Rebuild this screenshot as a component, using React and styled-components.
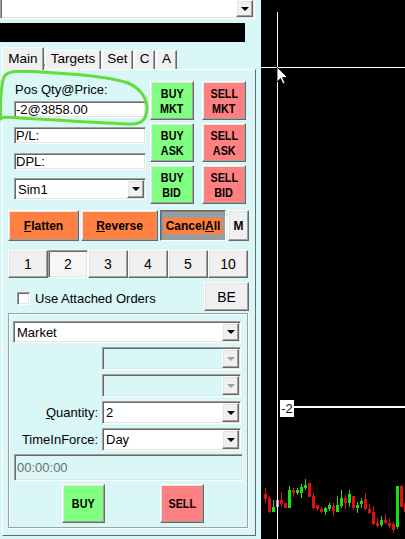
import React from "react";
import styled, { createGlobalStyle, css } from "styled-components";

const GlobalStyle = createGlobalStyle`
  * { box-sizing: border-box; }
  body {
    margin: 0;
    background: #000;
    overflow: hidden;
    font-family: "Liberation Sans", Arial, sans-serif;
  }
`;

const CYAN = "#daf7f7";
const FACE = "#f0f0f0";
const GREEN = "#80ff80";
const RED = "#ff8080";
const ORANGE = "#ff8040";

// classic 3D bevels
const raised = css`
  border: 1px solid;
  border-color: #fff #696969 #696969 #fff;
  box-shadow: inset -1px -1px #a0a0a0, inset 1px 1px #e3e3e3;
`;
const sunken = css`
  border: 1px solid;
  border-color: #a0a0a0 #fff #fff #a0a0a0;
  box-shadow: inset 1px 1px #696969, inset -1px -1px #e3e3e3;
`;

const Screen = styled.div`
  position: relative;
  display: flex;
  width: 405px;
  height: 539px;
  background: #000;
`;

const Side = styled.div`
  width: 261px;
  flex: none;
  display: flex;
  flex-direction: column;
  background: ${CYAN};
  color: #000;
  font-size: 13px;
`;

const TopCombo = styled.div`
  ${sunken};
  margin-top: -2px;
  width: 255px;
  height: 21px;
  padding: 1px;
  display: flex;
  justify-content: flex-end;
  background: #fff;
`;

const InfoBar = styled.div`
  margin-top: 4px;
  width: 245px;
  height: 19px;
  background: #000;
`;

const TabStrip = styled.div`
  margin-top: 5px;
  height: 22px;
  padding-left: 2px;
  display: flex;
  align-items: flex-end;
  gap: 1px;
`;

const Tab = styled.div`
  position: relative;
  z-index: 1;
  width: ${(p) => p.$w}px;
  height: ${(p) => (p.$active ? 23 : 19)}px;
  margin-bottom: ${(p) => (p.$active ? -1 : 0)}px;
  padding-top: ${(p) => (p.$active ? 3 : 0)}px;
  border: 1px solid;
  border-bottom: none;
  border-color: #fff #696969 transparent #fff;
  box-shadow: inset -1px 0 #a0a0a0;
  background: ${FACE};
  font-size: 13.5px;
  line-height: 15px;
  text-align: center;
`;

const TabPage = styled.div`
  margin-left: 2px;
  width: 254px;
  height: 467px;
  padding: 11px 6px 0 5px;
  border: 1px solid;
  border-color: #fff #696969 #696969 #fff;
  background: ${CYAN};
  display: flex;
  flex-direction: column;
`;

const TopGrid = styled.div`
  display: flex;
`;

const LeftCol = styled.div`
  margin-left: 6px;
  width: 132px;
  display: flex;
  flex-direction: column;
`;

const FieldLabel = styled.div`
  margin-top: 1px;
  padding-left: 1px;
  line-height: 15px;
`;

const Field = styled.div`
  ${sunken};
  margin-top: ${(p) => p.$mt}px;
  height: 17px;
  padding: 0 1px;
  display: flex;
  align-items: center;
  background: #fff;
  line-height: 15px;
  white-space: nowrap;
`;

const ComboBox = styled.div`
  ${sunken};
  margin-top: ${(p) => p.$mt || 0}px;
  height: ${(p) => p.$h || 22}px;
  padding: 1px;
  display: flex;
  align-items: stretch;
  background: ${(p) => (p.$disabled ? CYAN : "#fff")};
  grid-column: ${(p) => p.$span || "auto"};
`;

const ComboText = styled.div`
  flex: 1;
  display: flex;
  align-items: center;
  padding-left: 2px;
  font-size: 13px;
`;

const DropBtn = styled.div`
  ${raised};
  width: 17px;
  flex: none;
  display: flex;
  align-items: center;
  justify-content: center;
  background: ${FACE};
`;

const Arrow = styled.span`
  width: 0;
  height: 0;
  border-left: 4px solid transparent;
  border-right: 4px solid transparent;
  border-top: 4px solid ${(p) => (p.$disabled ? "#a0a0a0" : "#000")};
`;

const OrderGrid = styled.div`
  margin-left: 4px;
  display: grid;
  grid-template-columns: 44px 44px;
  grid-auto-rows: 39px;
  column-gap: 8px;
  row-gap: 3px;
`;

const ColorBtn = styled.div`
  ${raised};
  width: ${(p) => p.$w || 44}px;
  height: 39px;
  display: flex;
  flex-direction: column;
  align-items: center;
  justify-content: center;
  background: ${(p) => (p.$side === "buy" ? GREEN : RED)};
  font-weight: 700;
  font-size: 13.5px;
  line-height: 15px;
`;

// the trading buttons use a narrow bold face
const BtnLine = styled.span`
  display: inline-block;
  transform: scaleX(0.8);
`;

const ActionRow = styled.div`
  margin-top: 6px;
  height: 31px;
  display: flex;
  gap: 2px;
`;

const ActionBtn = styled.div`
  ${raised};
  width: ${(p) => p.$w}px;
  display: flex;
  align-items: center;
  justify-content: center;
  background: ${(p) => p.$bg || FACE};
  font-weight: 700;
  font-size: 12px;
`;

const CancelBtn = styled.div`
  width: 66px;
  display: flex;
  align-items: center;
  justify-content: center;
  border: 1px solid;
  border-color: #696969 #fff #fff #696969;
  box-shadow: inset 1px 1px #7a7a7a;
  background: #9c9c9c;
  font-weight: 700;
  font-size: 12px;
`;

const CancelText = styled.span`
  padding: 1px 2px;
  background: ${ORANGE};
`;

const NumRow = styled.div`
  margin-top: 9px;
  height: 28px;
  display: grid;
  grid-template-columns: repeat(6, 40px);
`;

const NumBtn = styled.div`
  ${(p) => (p.$pressed ? sunken : raised)};
  display: flex;
  align-items: center;
  justify-content: center;
  background: ${(p) => (p.$pressed ? "#f6f6f6" : FACE)};
  font-size: 14px;
`;

const OptionsRow = styled.div`
  margin-top: 4px;
  height: 29px;
  display: flex;
  align-items: center;
`;

const CheckBox = styled.div`
  ${sunken};
  margin: 4px 0 0 9px;
  width: 13px;
  height: 13px;
  background: #fff;
`;

const CheckLabel = styled.span`
  margin: 4px 0 0 5px;
  font-size: 13px;
`;

const BeBtn = styled.div`
  ${raised};
  margin-left: auto;
  width: 45px;
  height: 29px;
  display: flex;
  align-items: center;
  justify-content: center;
  background: ${FACE};
  font-size: 14px;
`;

const GroupBox = styled.div`
  margin-top: 2px;
  width: 240px;
  height: 215px;
  padding: 7px 0 0 4px;
  border: 1px solid #a0a0a0;
  box-shadow: 1px 1px 0 #fff, inset 1px 1px 0 #fff;
`;

const FormGrid = styled.div`
  display: grid;
  grid-template-columns: 89px 139px;
  grid-template-rows: 22px 23px 23px 23px 23px;
  row-gap: 4px;
`;

const FormLabel = styled.div`
  grid-column: 1;
  display: flex;
  align-items: center;
  justify-content: flex-end;
  padding-right: 4px;
  font-size: 13px;
`;

const TimeField = styled.div`
  ${sunken};
  margin: 3px 0 0 1px;
  width: 229px;
  height: 27px;
  padding-left: 2px;
  display: flex;
  align-items: center;
  background: ${CYAN};
  color: #6d6d6d;
  font-size: 13px;
`;

const SubmitRow = styled.div`
  margin-top: 3px;
  display: flex;
  gap: 55px;
  padding-left: 49px;
`;

const Chart = styled.svg`
  flex: 1;
  display: block;
`;

const Scribble = styled.svg`
  position: absolute;
  left: 0;
  top: 0;
  pointer-events: none;
`;

const Combo = ({ value, disabled, mt, h, span }) => (
  <ComboBox $disabled={disabled} $mt={mt} $h={h} $span={span}>
    <ComboText>{value}</ComboText>
    <DropBtn>
      <Arrow $disabled={disabled} />
    </DropBtn>
  </ComboBox>
);

const TABS = [
  { label: "Main", w: 42, active: true },
  { label: "Targets", w: 56 },
  { label: "Set", w: 31 },
  { label: "C", w: 21 },
  { label: "A", w: 21 },
];

const ORDER_BTNS = [
  ["buy", "BUY", "MKT"],
  ["sell", "SELL", "MKT"],
  ["buy", "BUY", "ASK"],
  ["sell", "SELL", "ASK"],
  ["buy", "BUY", "BID"],
  ["sell", "SELL", "BID"],
];

const SIZES = ["1", "2", "3", "4", "5", "10"];

// x, kind, open, close, high, low
const CANDLES = [
  [265, "r", 494, 499, 488, 503],
  [269, "r", 498, 512, 496, 513],
  [273, "g", 507, 512, 500, 512],
  [277, "m", 500, 507, 499, 508],
  [281, "r", 500, 504, 492, 507],
  [285, "r", 503, 508, 503, 508],
  [289, "g", 490, 508, 486, 508],
  [293, "r", 490, 493, 488, 497],
  [297, "g", 490, 493, 488, 495],
  [301, "g", 487, 493, 484, 498],
  [305, "g", 485, 488, 479, 490],
  [309, "r", 483, 497, 483, 497],
  [313, "r", 496, 508, 493, 509],
  [317, "r", 505, 509, 505, 511],
  [321, "r", 509, 512, 507, 513],
  [325, "g", 508, 512, 507, 515],
  [329, "g", 505, 509, 503, 511],
  [333, "r", 506, 511, 503, 516],
  [337, "g", 505, 512, 496, 512],
  [341, "g", 498, 506, 490, 508],
  [345, "r", 498, 503, 495, 509],
  [349, "g", 494, 503, 490, 507],
  [353, "r", 496, 508, 496, 510],
  [357, "g", 505, 508, 502, 513],
  [361, "g", 501, 504, 498, 508],
  [365, "r", 499, 509, 493, 510],
  [369, "r", 509, 513, 504, 514],
  [373, "r", 512, 524, 506, 525],
  [377, "r", 523, 526, 518, 527],
  [381, "g", 520, 525, 516, 527],
  [385, "r", 520, 523, 514, 524],
  [389, "r", 523, 526, 519, 528],
  [393, "r", 524, 530, 522, 533],
  [397, "g", 486, 527, 486, 529],
  [401, "r", 486, 507, 485, 507],
  [405, "r", 503, 512, 503, 512],
];

const CANDLE_COLOR = { r: "#e01010", g: "#18e018", m: "#c878d8" };

const PriceChart = () => (
  <Chart viewBox="261 0 144 539" width="144" height="539">
    <rect x="261" y="0" width="144" height="539" fill="#000" />
    {CANDLES.map(([x, k, o, c, hi, lo]) => (
      <g key={x} fill={CANDLE_COLOR[k]}>
        <rect x={x} y={hi} width="1" height={lo - hi} />
        <rect x={x - 1} y={Math.min(o, c)} width="3" height={Math.max(2, Math.abs(c - o))} />
      </g>
    ))}
    <rect x="261" y="67" width="144" height="1" fill="#fff" />
    <rect x="277" y="12" width="1" height="527" fill="#fff" />
    <rect x="294" y="406" width="111" height="2" fill="#fff" />
    <rect x="280" y="400" width="14" height="17" fill="#fff" />
    <text x="287" y="413" textAnchor="middle" fontSize="13" fontFamily="Liberation Sans, Arial, sans-serif" fill="#111">
      -2
    </text>
    <path
      d="M277 67 v15 l3.5 -3.5 l2.5 5.5 l2 -1 l-2.5 -5.5 h5 z"
      fill="#fff"
      stroke="#000"
      strokeWidth="0.8"
    />
  </Chart>
);

const App = () => (
  <>
    <GlobalStyle />
    <Screen>
      <Side>
        <TopCombo>
          <DropBtn>
            <Arrow />
          </DropBtn>
        </TopCombo>
        <InfoBar />
        <TabStrip>
          {TABS.map((t) => (
            <Tab key={t.label} $w={t.w} $active={t.active}>
              {t.label}
            </Tab>
          ))}
        </TabStrip>
        <TabPage>
          <TopGrid>
            <LeftCol>
              <FieldLabel>Pos Qty@Price:</FieldLabel>
              <Field $mt={4}>-2@3858.00</Field>
              <Field $mt={9}>P/L:</Field>
              <Field $mt={9}>DPL:</Field>
              <Combo value="Sim1" mt={8} />
            </LeftCol>
            <OrderGrid>
              {ORDER_BTNS.map(([side, a, b]) => (
                <ColorBtn key={a + b} $side={side}>
                  <BtnLine>{a}</BtnLine>
                  <BtnLine>{b}</BtnLine>
                </ColorBtn>
              ))}
            </OrderGrid>
          </TopGrid>

          <ActionRow>
            <ActionBtn $w={71} $bg={ORANGE}>
              <span><u>F</u>latten</span>
            </ActionBtn>
            <ActionBtn $w={77} $bg={ORANGE}>
              <span><u>R</u>everse</span>
            </ActionBtn>
            <CancelBtn>
              <CancelText>Cancel<u>A</u>ll</CancelText>
            </CancelBtn>
            <ActionBtn $w={21}>M</ActionBtn>
          </ActionRow>

          <NumRow>
            {SIZES.map((n) => (
              <NumBtn key={n} $pressed={n === "2"}>
                {n}
              </NumBtn>
            ))}
          </NumRow>

          <OptionsRow>
            <CheckBox />
            <CheckLabel>Use Attached Orders</CheckLabel>
            <BeBtn>BE</BeBtn>
          </OptionsRow>

          <GroupBox>
            <FormGrid>
              <Combo value="Market" span="1 / -1" h={22} />
              <Combo value="" disabled span="2" h={23} />
              <Combo value="" disabled span="2" h={23} />
              <FormLabel>
                <span><u>Q</u>uantity:</span>
              </FormLabel>
              <Combo value="2" span="2" h={23} />
              <FormLabel>TimeInForce:</FormLabel>
              <Combo value="Day" span="2" h={23} />
            </FormGrid>
            <TimeField>00:00:00</TimeField>
            <SubmitRow>
              <ColorBtn $side="buy" $w={43}>
                <BtnLine>BUY</BtnLine>
              </ColorBtn>
              <ColorBtn $side="sell">
                <BtnLine>SELL</BtnLine>
              </ColorBtn>
            </SubmitRow>
          </GroupBox>
        </TabPage>
      </Side>
      <PriceChart />
      <Scribble width="160" height="130" viewBox="0 0 160 130">
        <g fill="none" stroke="#63dd3b" strokeWidth="3" strokeLinecap="round" strokeLinejoin="round">
          <path d="M27 67 Q35 64 44 65" />
          <path d="M1 119 C0 105 1 85 4 77 C8 70 20 71 40 72 C80 74 110 77 128 83 C140 88 147 98 147 108 C147 118 143 124 132 124 C100 123 60 120 20 118 C10 117 4 117 0 118" />
        </g>
      </Scribble>
    </Screen>
  </>
);

export default App;
